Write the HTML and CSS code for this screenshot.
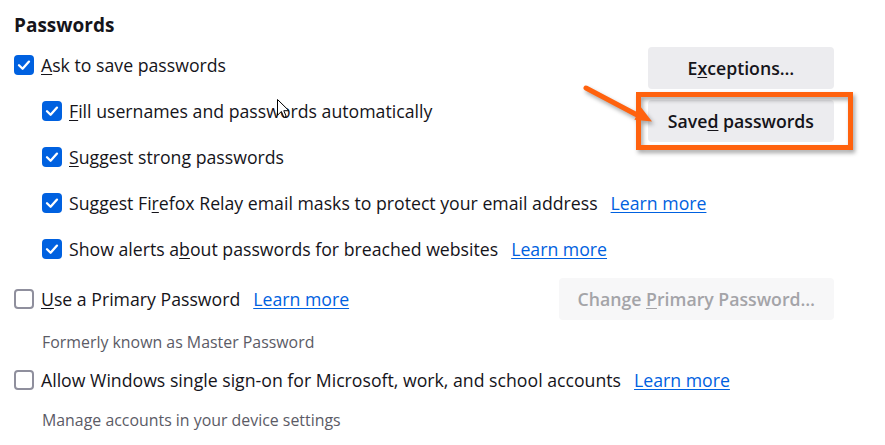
FILE: index.html
```html
<!DOCTYPE html>
<html lang="en">
<head>
<meta charset="utf-8">
<title>Passwords</title>
<link rel="stylesheet" href="styles.css">
</head>
<body>
<div class="page">
  <h2 class="heading">Passwords</h2>

  <div class="group">
    <div class="row r1">
      <span class="cb on"><svg viewBox="0 0 20 20"><polyline points="5,10.3 8.6,13.8 15,6.6"/></svg></span>
      <span class="label"><u>A</u>sk to save passwords</span>
    </div>
    <div class="buttons">
      <button class="btn">E<u>x</u>ceptions…</button>
      <button class="btn">Save<u>d</u> passwords</button>
    </div>
    <div class="row nested r2">
      <span class="cb on"><svg viewBox="0 0 20 20"><polyline points="5,10.3 8.6,13.8 15,6.6"/></svg></span>
      <span class="label"><u>F</u>ill usernames and passwords automatically</span>
    </div>
    <div class="row nested r3">
      <span class="cb on"><svg viewBox="0 0 20 20"><polyline points="5,10.3 8.6,13.8 15,6.6"/></svg></span>
      <span class="label"><u>S</u>uggest strong passwords</span>
    </div>
    <div class="row nested wide">
      <span class="cb on"><svg viewBox="0 0 20 20"><polyline points="5,10.3 8.6,13.8 15,6.6"/></svg></span>
      <span class="label">Suggest Fi<u>r</u>efox Relay email masks to protect your email address</span>
      <a class="link" href="#">Learn more</a>
    </div>
    <div class="row nested wide">
      <span class="cb on"><svg viewBox="0 0 20 20"><polyline points="5,10.3 8.6,13.8 15,6.6"/></svg></span>
      <span class="label">Show alerts a<u>b</u>out passwords for breached websites</span>
      <a class="link" href="#">Learn more</a>
    </div>
  </div>

  <div class="row primary">
    <span class="cb"></span>
    <span class="label"><u>U</u>se a Primary Password</span>
    <a class="link" href="#">Learn more</a>
    <button class="btn disabled">Change <u>P</u>rimary Password…</button>
  </div>
  <p class="sub first-sub">Formerly known as Master Password</p>

  <div class="row sso">
    <span class="cb"></span>
    <span class="label">Allow Windows single sign-on for Microsoft, work, and school accounts</span>
    <a class="link" href="#">Learn more</a>
  </div>
  <p class="sub second-sub">Manage accounts in your device settings</p>

  <svg class="annot" viewBox="0 0 885 445" width="885" height="445">
    <g class="annot-shapes">
      <rect x="638.5" y="94.5" width="212" height="53" />
      <line x1="586" y1="88" x2="640" y2="116.5" />
      <polygon points="652,121.5 641,107.2 634.4,119.8" />
    </g>
  </svg>

  <svg class="cursor" viewBox="0 0 13 20" width="13" height="20">
    <path d="M0.5 0.5 L0.5 16.2 L4.4 12.5 L6.9 18.4 L9.2 17.4 L6.8 11.7 L11.9 11.7 Z"/>
  </svg>
</div>
</body>
</html>
```

FILE: styles.css
```css
html, body {
  margin: 0;
  padding: 0;
  background: #ffffff;
}

body {
  font-family: "Open Sans", "Noto Sans", "DejaVu Sans", sans-serif;
  font-size: 17.7px;
  color: #15141a;
}

.page {
  position: relative;
  width: 885px;
  height: 445px;
  padding: 0 51px 0 14px;
  box-sizing: border-box;
  overflow: hidden;
}

.heading {
  margin: 13px 0 0 0;
  font-size: 19px;
  line-height: 24px;
  font-weight: 700;
  height: 24px;
}

.group {
  display: grid;
  grid-template-columns: 1fr auto;
  grid-auto-rows: 46px;
  margin-top: 5px;
}

.r1 { grid-column: 1; grid-row: 1; }
.r2 { grid-column: 1; grid-row: 2; }
.r3 { grid-column: 1; grid-row: 3; }
.wide { grid-column: 1 / -1; }

.row {
  display: flex;
  align-items: center;
  height: 46px;
  line-height: 24px;
  white-space: nowrap;
}

.row.nested {
  padding-left: 28px;
}

.cb {
  flex: none;
  width: 20px;
  height: 20px;
  box-sizing: border-box;
  border-radius: 4px;
  border: 2px solid #8f8f9d;
  background: #ffffff;
  margin-right: 7px;
  display: flex;
  align-items: center;
  justify-content: center;
}

.cb.on {
  border: none;
  background: #0061e0;
}

.cb svg {
  width: 20px;
  height: 20px;
  display: block;
}

.cb svg polyline {
  fill: none;
  stroke: #ffffff;
  stroke-width: 2.3;
  stroke-linecap: round;
  stroke-linejoin: round;
}

.label u {
  text-decoration-thickness: 1px;
  text-underline-offset: 2px;
}

.link {
  margin-left: 13px;
  color: #0061e0;
  text-decoration: underline;
  text-decoration-thickness: 1px;
  text-underline-offset: 2px;
}

.buttons {
  grid-column: 2;
  grid-row: 1 / 4;
  align-self: start;
  display: flex;
  flex-direction: column;
  gap: 11px;
  margin-top: 5px;
}

.btn {
  font-family: inherit;
  font-size: 17.7px;
  font-weight: 600;
  color: #15141a;
  background: #ececef;
  border: none;
  border-radius: 4px;
  height: 42px;
  padding: 0 20px;
  line-height: 24px;
  white-space: nowrap;
}

.btn u {
  text-decoration-thickness: 1px;
  text-underline-offset: 2px;
}

.btn.disabled {
  background: #f7f7f8;
  color: #a4a4a8;
  padding: 0 19px;
  margin-left: auto;
}

.row.primary {
  height: 42px;
  margin-top: 6px;
}

.sub {
  margin: 0;
  padding-left: 28px;
  font-size: 15.9px;
  line-height: 20px;
  color: #5b5b66;
}

.first-sub {
  margin-top: 12px;
}

.row.sso {
  height: 26px;
  margin-top: 15px;
}

.second-sub {
  margin-top: 17px;
}

.annot {
  position: absolute;
  left: 0;
  top: 0;
  pointer-events: none;
}

.annot-shapes {
  filter: drop-shadow(2px 3px 2px rgba(0, 0, 0, 0.35));
}

.annot rect {
  fill: none;
  stroke: #ff620e;
  stroke-width: 5;
}

.annot line {
  stroke: #ff620e;
  stroke-width: 5;
  stroke-linecap: round;
}

.annot polygon {
  fill: #ff620e;
}

.cursor {
  position: absolute;
  left: 277px;
  top: 99px;
  pointer-events: none;
}

.cursor path {
  fill: #ffffff;
  stroke: #000000;
  stroke-width: 1;
  stroke-linejoin: miter;
}
```
